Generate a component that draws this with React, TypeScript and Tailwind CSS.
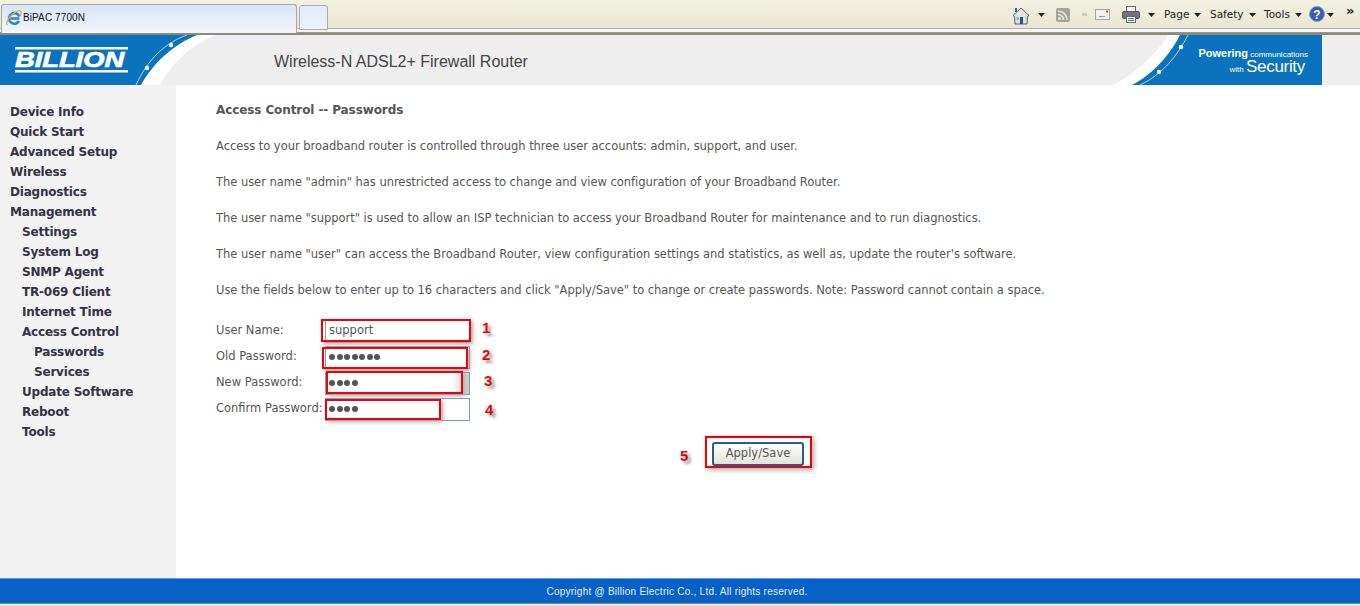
import React from "react";

const f = "font-['DejaVu_Sans',sans-serif]";

const Caret = ({ cls = "" }: { cls?: string }) => (
  <svg width="7" height="4" viewBox="0 0 7 4" className={cls}><path d="M0 0h7L3.500 4z" fill="#222" /></svg>
);

const IeIcon = () => (
  <svg width="16" height="17" viewBox="0 0 16 17">
    <path d="M13.300 9.500H4.800M13 12a5.300 5.300 0 1 1 .3-4.500" fill="none" stroke="#2a84d8" strokeWidth="2.600" />
    <path d="M1.500 16C-1 14 4 5 12 2c3.500-1.200 4 1.500 2 5" fill="none" stroke="#e8a823" strokeWidth="1.300" />
  </svg>
);

const HomeIcon = () => (
  <svg width="18" height="20" viewBox="0 0 18 20">
    <path d="M9 2 1 9.500 2.500 10.500 3 18h12l.5-7.500L17 9.500z" fill="#e6e2cf" stroke="#43648e" />
    <rect x="3" y="2" width="2" height="4" fill="#34569a" />
    <rect x="8" y="11" width="3" height="7" fill="#24539e" />
    <rect x="4.500" y="11" width="2.500" height="3" fill="#8fb2d8" />
  </svg>
);

const RssIcon = () => (
  <svg width="14" height="14" viewBox="0 0 14 14">
    <rect width="14" height="14" rx="2" fill="#a5a59c" />
    <circle cx="3.500" cy="10.500" r="1.500" fill="#e6e6df" />
    <path d="M2 6.500a5.500 5.500 0 0 1 5.500 5.500M2 3a9 9 0 0 1 9 9" fill="none" stroke="#e6e6df" strokeWidth="1.600" />
  </svg>
);

const MailIcon = () => (
  <svg width="15" height="11" viewBox="0 0 15 11">
    <rect x=".5" y=".5" width="14" height="10" fill="#f3f1e8" stroke="#a8a89e" />
    <rect x="11" y="1.500" width="2" height="2" fill="#d8453c" />
    <rect x="4" y="7" width="6" height="1" fill="#9a9a92" />
  </svg>
);

const PrintIcon = () => (
  <svg width="18" height="17" viewBox="0 0 18 17">
    <rect x="4.500" y=".5" width="9" height="6" fill="#f4f4f0" stroke="#666" />
    <rect x=".5" y="5.500" width="17" height="7" rx="1.500" fill="#73757a" stroke="#55575c" />
    <rect x="4.500" y="10.500" width="9" height="6" fill="#fff" stroke="#666" />
    <rect x="6" y="12" width="6" height="1" fill="#3f74b4" />
    <rect x="6" y="14" width="6" height="1" fill="#3f74b4" />
  </svg>
);

const HelpIcon = () => (
  <svg width="16" height="16" viewBox="0 0 16 16">
    <circle cx="8" cy="8" r="7.500" fill="#3b5cb0" stroke="#8f9cc0" />
    <text x="8" y="12.500" textAnchor="middle" fontSize="12" fontWeight="700" fontFamily="Liberation Sans" fill="#fff">?</text>
  </svg>
);

const Menu = ({ label, w }: { label: string; w: string }) => (
  <div className={`flex items-center gap-[5px] ${w} text-[10.500px] text-[#222]`}>
    {label}
    <Caret />
  </div>
);

const TopBar = () => (
  <div className="flex h-[33px] shrink-0 border-b border-[#9a9a8c] bg-[linear-gradient(to_bottom,#f3f1e2_0,#e9e6d2_28px,#aeb0c4_28px,#aeb0c4_29px,#f6f5ee_29px)]">
    <div className="ml-px mt-1 flex h-[29px] w-[296px] items-center gap-px rounded-t-[3px] border border-[#a5a8a8] border-b-0 bg-gradient-to-b from-[#d7e4f8] to-[#f4f7fc] pl-1 pb-1 text-[#111]">
      <IeIcon />
      <span className="font-['Liberation_Sans',sans-serif] text-[10px] tracking-[.1px]">BiPAC 7700N</span>
    </div>
    <div className="ml-[2px] mt-[5px] h-[25px] w-[29px] rounded-t-[3px] border border-[#a8acb0] bg-gradient-to-b from-[#e2ebf8] to-[#eef3fa]" />
    <div className="ml-[684px] flex items-start pt-[6px] font-['DejaVu_Sans',sans-serif]">
      <HomeIcon />
      <Caret cls="ml-2 mt-[7px]" />
      <div className="ml-[11px] mt-[2px]"><RssIcon /></div>
      <div className="ml-[12px] mt-[7px] h-[3px] w-[5px] bg-[#d0cec0]" />
      <div className="ml-[8px] mt-[3px]"><MailIcon /></div>
      <div className="ml-[12px]"><PrintIcon /></div>
      <Caret cls="ml-2 mt-[7px]" />
      <div className="ml-[9px] mt-px flex">
        <Menu label="Page" w="w-[46px]" />
        <Menu label="Safety" w="w-[54px]" />
        <Menu label="Tools" w="w-[45px]" />
      </div>
      <HelpIcon />
      <Caret cls="ml-[2px] mt-[7px]" />
      <span className="ml-3 -mt-[5px] text-[13px] font-bold text-[#222]">»</span>
    </div>
  </div>
);

const Header = () => (
  <div className="flex h-[52px] shrink-0 items-stretch border-t-2 border-[#8f8a78] bg-[#eeeeee]">
    <div className="relative h-[50px] w-[230px] shrink-0">
      <svg width="230" height="50" viewBox="0 0 230 50" className="absolute inset-0">
        <path d="M197 0C172 10 152 30 141 50H160C172 28 190 10 216 0z" fill="#fff" />
        <path d="M0 0H197C172 10 152 30 141 50H0z" fill="#0b72bd" />
        <path d="M187 0C165 8 148 24 136 50" fill="none" stroke="#dcecf7" strokeWidth=".8" />
        <circle cx="171" cy="10" r="2.200" fill="#fff" />
        <circle cx="147" cy="33" r="2.200" fill="#fff" />
        <rect x="15" y="12" width="113" height="2.500" fill="#fff" />
        <rect x="15" y="35" width="113" height="2.500" fill="#fff" />
      </svg>
      <span className="absolute left-[15px] top-[14px] origin-left scale-x-[1.24] font-['Liberation_Sans',sans-serif] text-[22px] font-bold italic leading-[22px] text-white [-webkit-text-stroke:.7px_white]">BILLION</span>
    </div>
    <div className="ml-[44px] mt-4 font-['Liberation_Sans',sans-serif] text-[16px] leading-[22px] text-[#444]">Wireless-N ADSL2+ Firewall Router</div>
    <div className="relative ml-auto mr-[38px] h-[50px] w-[210px] shrink-0">
      <svg width="210" height="50" viewBox="0 0 210 50" className="absolute inset-0">
        <path d="M56 0H68C58 20 40 40 20 50H1C24 38 44 20 56 0z" fill="#fff" />
        <path d="M68 0H210V50H20C40 40 58 20 68 0z" fill="#0b72bd" />
        <path d="M76 0C66 20 50 40 28 50" fill="none" stroke="#dcecf7" strokeWidth=".8" />
        <circle cx="69" cy="12" r="2.200" fill="#fff" />
        <circle cx="47" cy="37" r="2.200" fill="#fff" />
      </svg>
      <div className="absolute right-[14px] top-[13px] whitespace-nowrap text-right font-['Liberation_Sans',sans-serif] leading-none text-white">
        <div className="text-[8px]"><span className="text-[11px] font-bold">Powering</span> communications</div>
        <div className="-mt-px pr-[3px] text-[8px]">with <span className="text-[17px] tracking-[-.3px]">Security</span></div>
      </div>
    </div>
  </div>
);

const nav: [string, number][] = [
  ["Device Info", 0], ["Quick Start", 0], ["Advanced Setup", 0], ["Wireless", 0], ["Diagnostics", 0], ["Management", 0],
  ["Settings", 1], ["System Log", 1], ["SNMP Agent", 1], ["TR-069 Client", 1], ["Internet Time", 1], ["Access Control", 1],
  ["Passwords", 2], ["Services", 2], ["Update Software", 1], ["Reboot", 1], ["Tools", 1],
];
const pads = ["pl-[10px]", "pl-[22px]", "pl-[34px]"];

const Sidebar = () => (
  <div className="w-[176px] shrink-0 bg-[#f2f2f2] pt-[17px]">
    {nav.map(([n, l]) => (
      <div key={n} className={`${pads[l]} h-5 text-[12px] font-bold leading-5 tracking-[-.2px] text-[#333344]`}>{n}</div>
    ))}
  </div>
);

const Num = ({ n, cls }: { n: number; cls: string }) => (
  <span className={`absolute ${cls} font-['Liberation_Sans',sans-serif] text-[15px] font-bold leading-4 text-[#f00000] [text-shadow:3px_3px_3px_#999]`}>{n}</span>
);

const numPos = ["", "left-[157px] top-0", "left-[157px] top-px", "left-[159px] top-px", "left-[160px] top-[4px]"];

const Row = ({ label, value, dots, box, num, shade }: { label: string; value?: string; dots?: number; box: string; num: number; shade: boolean }) => (
  <div className="flex h-[26px] items-center">
    <div className="w-[109px] whitespace-nowrap text-[11.500px] text-[#555]">{label}</div>
    <div className="relative">
      <div className={`flex h-[23px] w-[145px] items-center gap-[1.500px] border border-[#7f9db9] pl-[3px] text-[11.500px] text-[#555] ${shade ? "bg-gradient-to-r from-white from-[88%] to-[#ccc]" : "bg-white"}`}>
        {value}
        {Array.from({ length: dots ?? 0 }).map((_, i) => (
          <span key={i} className="h-[6px] w-[6px] rounded-full bg-[#555]" />
        ))}
      </div>
      <div className={`absolute ${box} border-2 border-[#f00000] shadow-[2px_2px_4px_#aaa]`} />
      <Num n={num} cls={numPos[num]} />
    </div>
  </div>
);

const paragraphs = [
  "Access to your broadband router is controlled through three user accounts: admin, support, and user.",
  'The user name "admin" has unrestricted access to change and view configuration of your Broadband Router.',
  'The user name "support" is used to allow an ISP technician to access your Broadband Router for maintenance and to run diagnostics.',
  'The user name "user" can access the Broadband Router, view configuration settings and statistics, as well as, update the router\'s software.',
  'Use the fields below to enter up to 16 characters and click "Apply/Save" to change or create passwords. Note: Password cannot contain a space.',
];

const Content = () => (
  <div className="flex-1 bg-white pl-10 pt-[17px] text-[#555]">
    <div className="text-[12px] font-bold leading-4 tracking-[-.1px] text-[#555]">Access Control -- Passwords</div>
    <div className="mt-5">
      {paragraphs.map((p) => (
        <p key={p} className="mb-5 h-4 whitespace-nowrap text-[11.500px] leading-4 tracking-[-.035px]">{p}</p>
      ))}
    </div>
    <div className="mt-[6px]">
      <Row label="User Name:" value="support" box="-left-[4px] -top-px h-[23px] w-[150px]" num={1} shade={false} />
      <Row label="Old Password:" dots={7} box="-left-[3px] top-px h-[22px] w-[146px]" num={2} shade={false} />
      <Row label="New Password:" dots={4} box="left-px -top-px h-[23px] w-[137px]" num={3} shade />
      <Row label="Confirm Password:" dots={4} box="left-0 top-px h-[21px] w-[116px]" num={4} shade={false} />
    </div>
    <div className="relative ml-[496px] mt-[18px] h-6 w-[92px]">
      <button className="h-6 w-[92px] rounded-[3px] border-2 border-[#2b5a8c] bg-gradient-to-b from-white to-[#e4e2d6] text-[11.500px] text-[#555]">Apply/Save</button>
      <div className="absolute -left-[7px] -top-[4px] h-[32px] w-[107px] border-2 border-[#f00000] shadow-[2px_2px_5px_#aaa]" />
      <Num n={5} cls="-left-[32px] top-2" />
    </div>
  </div>
);

const Footer = () => (
  <div className="flex h-[25px] shrink-0 items-center justify-center border-t border-[#5aa0f0] bg-[#0561c6] pr-[6px] font-['Liberation_Sans',sans-serif] text-[10px] tracking-[.25px] text-[#e8eef8]">
    Copyright @ Billion Electric Co., Ltd. All rights reserved.
  </div>
);

export default function App() {
  return (
    <div className={`flex h-[606px] w-[1360px] flex-col overflow-hidden bg-white ${f}`}>
      <TopBar />
      <Header />
      <div className="flex flex-1"><Sidebar /><Content /></div>
      <Footer />
      <div className="h-[3px] shrink-0 border-t border-[#8a8a8a] bg-[#e8e8e8]" />
    </div>
  );
}
